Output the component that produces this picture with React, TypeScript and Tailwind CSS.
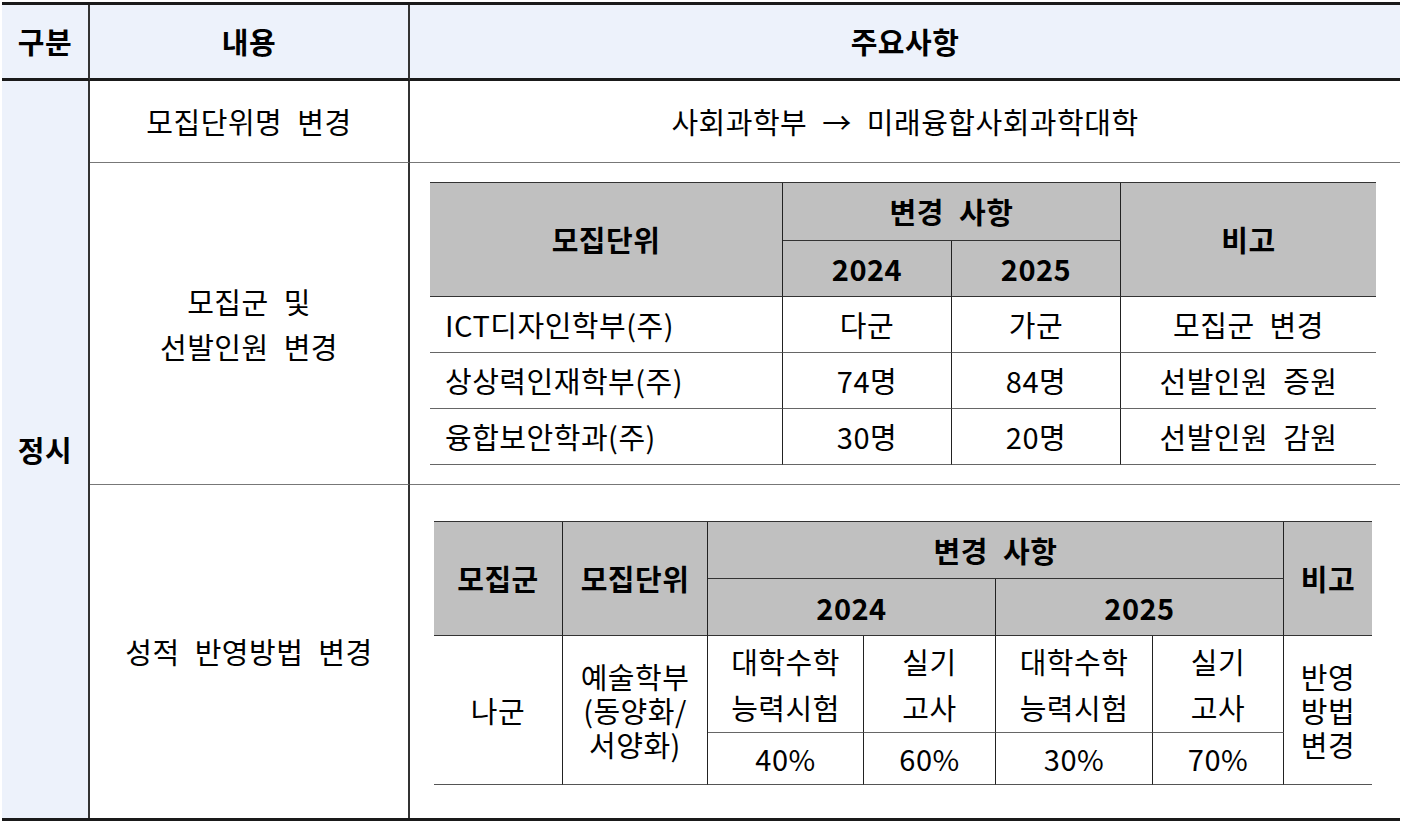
import type { ReactNode } from 'react'

function Cell ({ className = '', children }: { className?: string; children?: ReactNode }) {
  return <div className={`flex items-center justify-center text-center ${className}`}>{children}</div>
}

const UNITS = [
  ['ICT디자인학부(주)', '다군', '가군', '모집군 변경'],
  ['상상력인재학부(주)', '74명', '84명', '선발인원 증원'],
  ['융합보안학과(주)', '30명', '20명', '선발인원 감원']
]

function UnitTable () {
  return (
    <div className="grid w-[946px] grid-cols-[353px_169px_169px_255px] grid-rows-[58px_56px_56px_56px_56px] border-t border-t-[#333]">
      <Cell className="row-span-2 border-r border-b border-r-[#222] border-b-[#333] bg-[#c0c0c0] font-bold">모집단위</Cell>
      <Cell className="col-span-2 border-r border-b border-r-[#222] border-b-[#333] bg-[#c0c0c0] font-bold">변경 사항</Cell>
      <Cell className="row-span-2 border-b border-b-[#333] bg-[#c0c0c0] font-bold">비고</Cell>
      <Cell className="border-r border-b border-r-[#222] border-b-[#333] bg-[#c0c0c0] font-bold">2024</Cell>
      <Cell className="border-r border-b border-r-[#222] border-b-[#333] bg-[#c0c0c0] font-bold">2025</Cell>
      {UNITS.map(row => (
        <div key={row[0]} className="contents">
          <Cell className="justify-start! border-r border-b border-r-[#222] border-b-[#666] pl-[15px]">{row[0]}</Cell>
          <Cell className="border-r border-b border-r-[#222] border-b-[#666]">{row[1]}</Cell>
          <Cell className="border-r border-b border-r-[#222] border-b-[#666]">{row[2]}</Cell>
          <Cell className="border-b border-b-[#666]">{row[3]}</Cell>
        </div>
      ))}
    </div>
  )
}

function ScoreTable () {
  return (
    <div className="grid w-[938px] grid-cols-[129px_145px_156px_132px_157px_131px_88px] grid-rows-[57px_57px_97px_52px] border-t border-t-[#333]">
      <Cell className="row-span-2 border-r border-b border-r-[#222] border-b-[#333] bg-[#c0c0c0] font-bold">모집군</Cell>
      <Cell className="row-span-2 border-r border-b border-r-[#222] border-b-[#333] bg-[#c0c0c0] font-bold">모집단위</Cell>
      <Cell className="col-span-4 border-r border-b border-r-[#222] border-b-[#333] bg-[#c0c0c0] font-bold">변경 사항</Cell>
      <Cell className="row-span-2 border-b border-b-[#333] bg-[#c0c0c0] font-bold">비고</Cell>
      <Cell className="col-span-2 border-r border-b border-r-[#222] border-b-[#333] bg-[#c0c0c0] font-bold">2024</Cell>
      <Cell className="col-span-2 border-r border-b border-r-[#222] border-b-[#333] bg-[#c0c0c0] font-bold">2025</Cell>

      <Cell className="row-span-2 border-r border-b border-r-[#222] border-b-[#555]">나군</Cell>
      <Cell className="row-span-2 border-r border-b border-r-[#222] border-b-[#555] leading-[34px]">예술학부<br />(동양화/<br />서양화)</Cell>
      <Cell className="border-r border-b border-r-[#222] border-b-[#666] leading-[46px]">대학수학<br />능력시험</Cell>
      <Cell className="border-r border-b border-r-[#222] border-b-[#666] leading-[46px]">실기<br />고사</Cell>
      <Cell className="border-r border-b border-r-[#222] border-b-[#666] leading-[46px]">대학수학<br />능력시험</Cell>
      <Cell className="border-r border-b border-r-[#222] border-b-[#666] leading-[46px]">실기<br />고사</Cell>
      <Cell className="row-span-2 border-b border-b-[#555] leading-[34px]">반영<br />방법<br />변경</Cell>
      <Cell className="border-r border-b border-r-[#222] border-b-[#555]">40%</Cell>
      <Cell className="border-r border-b border-r-[#222] border-b-[#555]">60%</Cell>
      <Cell className="border-r border-b border-r-[#222] border-b-[#555]">30%</Cell>
      <Cell className="border-r border-b border-r-[#222] border-b-[#555]">70%</Cell>
    </div>
  )
}

export default function App () {
  return (
    <div className="min-h-screen bg-white pl-[2px] pt-[2px] font-['Noto_Sans_CJK_KR','Open_Sans',sans-serif] text-[29px] leading-none tracking-[0.5px] text-black [word-spacing:8px]">
      <div className="grid w-[1398px] grid-cols-[88px_320px_990px] grid-rows-[76px_82px_322px_333px] border-y-[3px] border-[#1a1a1a]">
        <Cell className="border-r-2 border-b-[3px] border-r-[#333] border-b-[#1a1a1a] bg-[#edf2fb] font-bold">구분</Cell>
        <Cell className="border-r-2 border-b-[3px] border-r-[#333] border-b-[#1a1a1a] bg-[#edf2fb] font-bold">내용</Cell>
        <Cell className="border-b-[3px] border-b-[#1a1a1a] bg-[#edf2fb] font-bold">주요사항</Cell>

        <Cell className="row-span-3 border-r-2 border-r-[#333] bg-[#edf2fb] font-bold">정시</Cell>
        <Cell className="border-r-2 border-b border-r-[#333] border-b-[#777]">모집단위명 변경</Cell>
        <Cell className="border-b border-b-[#777]">사회과학부 → 미래융합사회과학대학</Cell>

        <Cell className="border-r-2 border-b border-r-[#333] border-b-[#777] leading-[45px]">모집군 및<br />선발인원 변경</Cell>
        <div className="border-b border-b-[#777] pl-[20px] pt-[19px]">
          <UnitTable />
        </div>

        <Cell className="border-r-2 border-r-[#333]">성적 반영방법 변경</Cell>
        <div className="pl-[24px] pt-[36px]">
          <ScoreTable />
        </div>
      </div>
    </div>
  )
}
